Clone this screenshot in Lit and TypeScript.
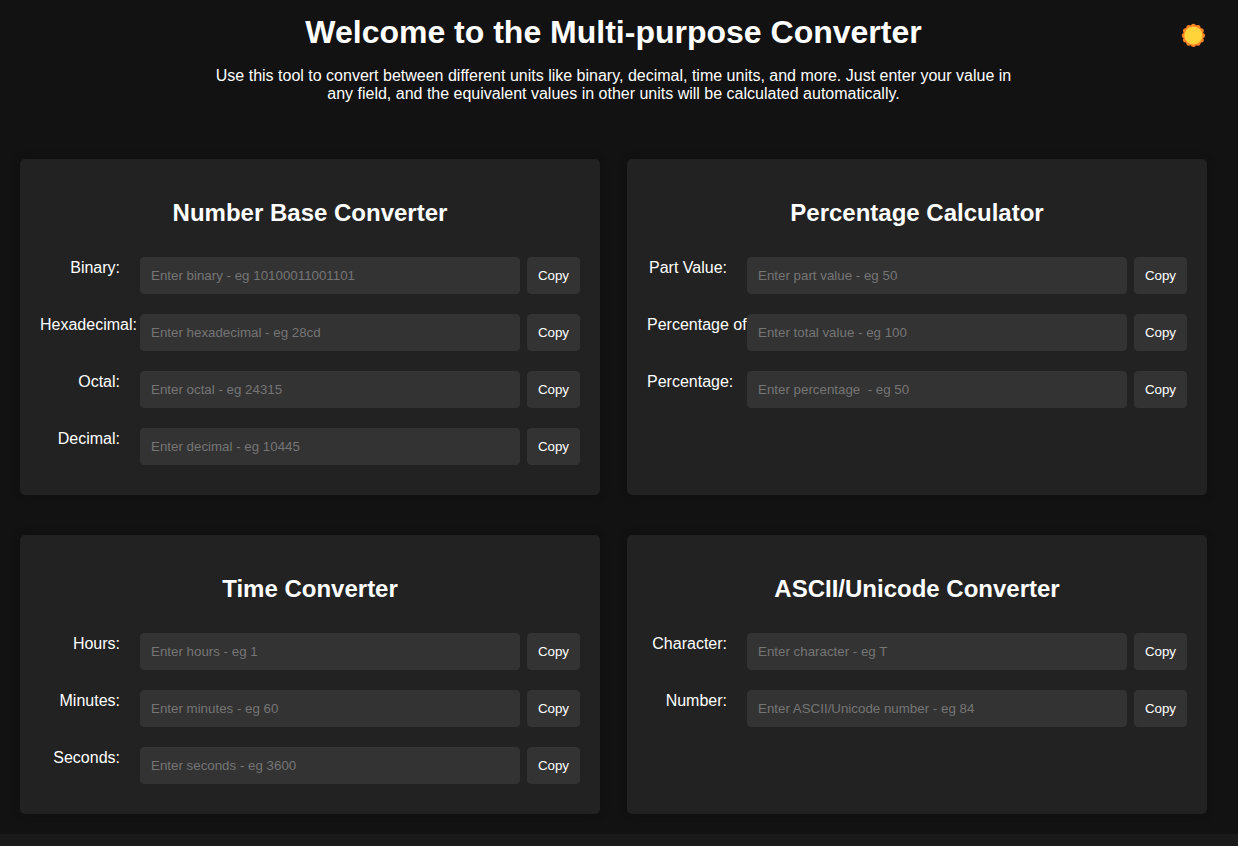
import { LitElement, html, svg, css } from "lit";
import { customElement, property, state } from "lit/decorators.js";

interface Field {
  id: string;
  label: string;
  placeholder: string;
}

interface Converter {
  title: string;
  fields: Field[];
}

const CONVERTERS: Converter[] = [
  {
    title: "Number Base Converter",
    fields: [
      { id: "binary", label: "Binary:", placeholder: "Enter binary - eg 10100011001101" },
      { id: "hexadecimal", label: "Hexadecimal:", placeholder: "Enter hexadecimal - eg 28cd" },
      { id: "octal", label: "Octal:", placeholder: "Enter octal - eg 24315" },
      { id: "decimal", label: "Decimal:", placeholder: "Enter decimal - eg 10445" },
    ],
  },
  {
    title: "Percentage Calculator",
    fields: [
      { id: "part", label: "Part Value:", placeholder: "Enter part value - eg 50" },
      { id: "total", label: "Percentage of", placeholder: "Enter total value - eg 100" },
      { id: "percentage", label: "Percentage:", placeholder: "Enter percentage  - eg 50" },
    ],
  },
  {
    title: "Time Converter",
    fields: [
      { id: "hours", label: "Hours:", placeholder: "Enter hours - eg 1" },
      { id: "minutes", label: "Minutes:", placeholder: "Enter minutes - eg 60" },
      { id: "seconds", label: "Seconds:", placeholder: "Enter seconds - eg 3600" },
    ],
  },
  {
    title: "ASCII/Unicode Converter",
    fields: [
      { id: "character", label: "Character:", placeholder: "Enter character - eg T" },
      { id: "number", label: "Number:", placeholder: "Enter ASCII/Unicode number - eg 84" },
    ],
  },
];

@customElement("converter-card")
class ConverterCard extends LitElement {
  @property({ attribute: false }) converter!: Converter;

  static styles = css`
    :host {
      display: block;
      box-sizing: border-box;
      min-width: 0;
      padding: 40px 20px 30px;
      background: #222;
      border-radius: 5px;
      box-shadow: 0 0 10px rgba(0, 0, 0, 0.2);
    }
    .title {
      margin: 0 0 30px;
      font-size: 24px;
      line-height: 28px;
      font-weight: 700;
      text-align: center;
    }
    .fields {
      display: grid;
      gap: 20px;
    }
    .field {
      display: grid;
      grid-template-columns: 80px minmax(0, 1fr) auto;
      align-items: start;
    }
    .label {
      justify-self: end;
      min-width: 0;
      max-width: 80px;
      line-height: 22px;
      white-space: nowrap;
    }
    .input,
    .copy {
      box-sizing: border-box;
      height: 37px;
      padding: 0 10px;
      border: 1px solid #333;
      border-radius: 4px;
      background: #333;
      color: #fff;
      font-family: "Liberation Sans", Arial, sans-serif;
    }
    .input {
      width: 100%;
    }
    .input::placeholder {
      color: #757575;
    }
    .control {
      padding-left: 20px;
      padding-right: 7px;
    }
    .copy {
      font-weight: 500;
      cursor: pointer;
    }
    .copy:hover {
      background: #444;
    }
  `;

  private copy(id: string) {
    const input = this.renderRoot.querySelector<HTMLInputElement>(`#${id}`);
    if (input) navigator.clipboard?.writeText(input.value);
  }

  render() {
    return html`
      <h2 class="title">${this.converter.title}</h2>
      <div class="fields">
        ${this.converter.fields.map(
          (field) => html`
            <div class="field">
              <label class="label" for=${field.id}>${field.label}</label>
              <div class="control">
                <input class="input" id=${field.id} type="text" placeholder=${field.placeholder} />
              </div>
              <button class="copy" type="button" @click=${() => this.copy(field.id)}>Copy</button>
            </div>
          `
        )}
      </div>
    `;
  }
}

@customElement("app-root")
class AppRoot extends LitElement {
  @state() private light = false;

  static styles = css`
    :host {
      display: flex;
      flex-direction: column;
      min-height: 100vh;
      background: #1a1a1a;
      color: #fff;
      font-family: "Liberation Sans", Arial, sans-serif;
      font-size: 16px;
    }
    .page {
      padding: 14px 31px 20px 20px;
      background: #121212;
    }
    .header {
      display: grid;
      grid-template-columns: 1fr minmax(0, 800px) 1fr;
      margin-bottom: 56px;
    }
    .intro {
      grid-column: 2;
      text-align: center;
    }
    .heading {
      margin: 0 0 17px;
      font-size: 32px;
      line-height: 36px;
      font-weight: 700;
    }
    .lead {
      margin: 0;
      line-height: 18px;
    }
    .theme {
      justify-self: end;
      align-self: start;
      display: block;
      margin-top: 9px;
      padding: 0;
      border: 0;
      background: none;
      cursor: pointer;
    }
    .sun {
      display: block;
      width: 26px;
      height: 24px;
    }
    .cards {
      display: grid;
      grid-template-columns: repeat(2, minmax(0, 1fr));
      gap: 40px 27px;
    }
  `;

  render() {
    const bumps = Array.from({ length: 12 }, (_, i) => (i * Math.PI) / 6);
    return html`
      <main class="page">
        <header class="header">
          <div class="intro">
            <h1 class="heading">Welcome to the Multi-purpose Converter</h1>
            <p class="lead">
              Use this tool to convert between different units like binary, decimal, time units, and
              more. Just enter your value in any field, and the equivalent values in other units will
              be calculated automatically.
            </p>
          </div>
          <button
            class="theme"
            type="button"
            aria-label="Toggle theme"
            aria-pressed=${this.light}
            @click=${() => (this.light = !this.light)}
          >
            <svg class="sun" viewBox="-12.4 -12.4 26 24" aria-hidden="true">
              <g fill="#ff8426">
                <circle r="10.3" />
                ${bumps.map(
                  (a) => svg`<circle cx=${9.1 * Math.sin(a)} cy=${-9.1 * Math.cos(a)} r="2.5" />`
                )}
              </g>
              <circle r="9" fill="#ffd43b" />
            </svg>
          </button>
        </header>
        <div class="cards">
          ${CONVERTERS.map((c) => html`<converter-card .converter=${c}></converter-card>`)}
        </div>
      </main>
    `;
  }
}
